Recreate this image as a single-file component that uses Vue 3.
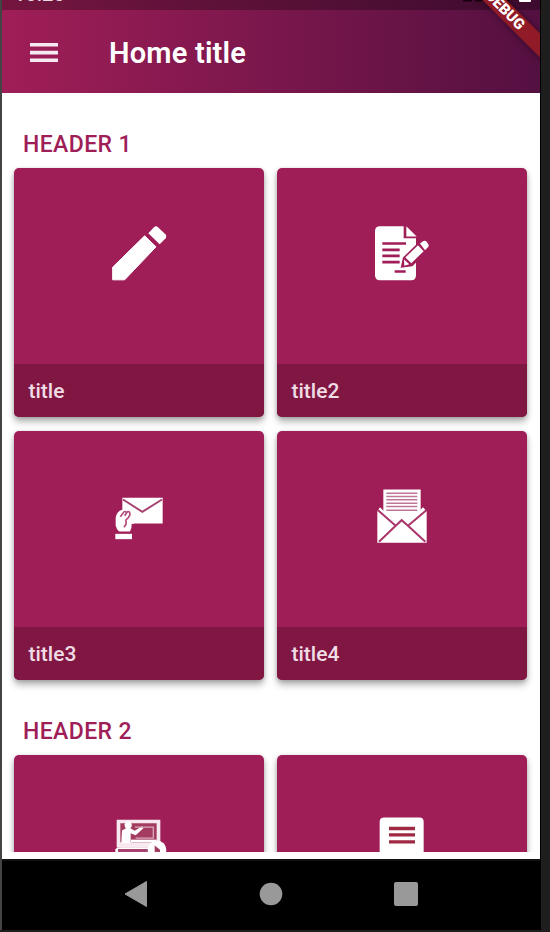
<script setup>
const sections = [
  {
    header: 'HEADER 1',
    cards: [
      { title: 'title', icon: 'pencil' },
      { title: 'title2', icon: 'document' },
      { title: 'title3', icon: 'hand' },
      { title: 'title4', icon: 'mail' },
    ],
  },
  {
    header: 'HEADER 2',
    cards: [
      { title: '', icon: 'class' },
      { title: '', icon: 'notes' },
    ],
  },
]
</script>

<template>
  <div class="device">
    <div class="screen">
      <header class="top">
        <div class="status">
          <span class="clock">10:20</span>
          <svg class="signals" width="80" height="10" viewBox="0 0 80 10">
            <path d="M3 0h9v1.5H3zM15 0h7v1.5h-7zM36 0h14v1.5H36z" fill="#16020f" />
            <rect x="59" y="-6" width="12" height="8" rx="1" fill="#fff" />
          </svg>
        </div>
        <div class="appbar">
          <svg class="menu" width="28" height="22" viewBox="0 0 28 22">
            <path d="M0 1h28v3.6H0zM0 8.8h28v3.6H0zM0 16.4h28V20H0z" fill="#f6e9ef" />
          </svg>
          <h1>Home title</h1>
        </div>
        <div class="debug">DEBUG</div>
      </header>

      <main class="content">
        <section v-for="s in sections" :key="s.header">
          <h2>{{ s.header }}</h2>
          <div class="grid">
            <article v-for="c in s.cards" :key="c.icon" class="card">
              <svg class="art" width="250" height="196" viewBox="0 0 250 196">
                <g v-if="c.icon === 'pencil'" transform="translate(76 42.5) scale(.33333)" fill="#fff">
                  <path d="M68 170 164 76 198 109 104 208H68z" stroke="#fff" stroke-width="3" stroke-linejoin="round" />
                  <path d="M175 68 192 50Q198 45 204 50L227 72Q231 78 227 83L209 101z" />
                </g>
                <g v-else-if="c.icon === 'document'" transform="translate(73 42.5) scale(.33333)">
                  <path d="M90 47H161V83H198V194Q198 209 184 209H90Q75 209 75 194V62Q75 47 90 47z" fill="#fff" />
                  <path d="M169 47 200 78H169z" fill="#fff" />
                  <path d="M97 99H168M97 118H149M97 136H149M97 155H149M134 183H167" stroke="#a01e57" stroke-width="8" />
                  <path d="M152 172 159 141 209 92 237 119 187 167z" fill="#a01e57" />
                  <path d="M210 99 219 92Q226 88 231 95L235 101Q238 106 233 111L225 119zM204 104 221 122 184 158 166 141zM162 147 178 161 163 166z" fill="#fff" />
                </g>
                <g v-else-if="c.icon === 'hand'" transform="translate(76 44.5) scale(.33333)">
                  <path d="M97 67H218V144H97z" fill="#fff" />
                  <path d="M99 72 157 109 216 72" fill="none" stroke="#a84270" stroke-width="6" />
                  <path d="M96 103Q78 109 77 130V150Q79 160 87 168H120Q126 158 125 145H132V118L120 104z" fill="#fff" />
                  <path d="M91 124 99 113Q105 103 110 113M104 121 112 109Q119 105 120 117Q117 127 108 133V146L102 155" fill="none" stroke="#b3477b" stroke-width="5" />
                  <path d="M76 175H126V191H76z" fill="#fff" />
                </g>
                <g v-else-if="c.icon === 'mail'" transform="translate(73 44.5) scale(.33333)">
                  <path d="M100 42H212V118L155 155 100 118z" fill="#fff" />
                  <path d="M109 53H202M109 63H202M109 73H202M109 83H202M109 93H202M109 104H202" stroke="#be7698" stroke-width="4.5" />
                  <path d="M82 107 90 95 100 105 137 142 155 127 174 142 219 95 230 107V202H82z" fill="#fff" />
                  <path d="M84 104 137 151 87 199M229 104 174 151 226 199M137 151 155 134 174 151" fill="none" stroke="#a9356a" stroke-width="6" />
                </g>
                <g v-else-if="c.icon === 'class'" transform="translate(76 44.5) scale(.33333)">
                  <path d="M80 61H211V144H80z" fill="#f7e9ef" />
                  <path d="M91 71H200V128H91z" fill="#a33c60" />
                  <path d="M96 93 108 86A11 11 0 1 1 121 86L134 94 157 80 160 86 137 107 122 101V131H94z" fill="#fff" />
                  <path d="M135 83H190V116H137" fill="none" stroke="#dba8b8" stroke-width="4" />
                  <path d="M123 124H200" stroke="#fff" stroke-width="7" />
                  <path d="M76 158V149Q80 143 89 143H200V158" fill="#fff" />
                  <path d="M84 153H178" stroke="#a84270" stroke-width="9" />
                  <circle cx="201" cy="151" r="28" fill="#fff" />
                  <path d="M194 138 210 151V160H194z" fill="#a33c60" />
                </g>
                <g v-else transform="translate(73 44.5) scale(.33333)">
                  <path d="M103 54H208Q221 54 221 67V180H89V67Q89 54 103 54z" fill="#fff" />
                  <path d="M117 87H195M117 106H195M117 127H195" stroke="#9f2943" stroke-width="10" />
                </g>
              </svg>
              <footer>{{ c.title }}</footer>
            </article>
          </div>
        </section>
      </main>

      <nav class="nav">
        <svg width="24" height="28" viewBox="0 0 24 28"><path d="M1 14 22.5 1.5v25z" fill="#999" stroke="#999" stroke-linejoin="round" /></svg>
        <svg width="24" height="28" viewBox="0 0 24 28"><circle cx="12" cy="14" r="11.3" fill="#999" /></svg>
        <svg width="24" height="28" viewBox="0 0 24 28"><rect y="2" width="24" height="24" rx="2" fill="#999" /></svg>
      </nav>
    </div>
  </div>
</template>

<style>
body { background: #1e1e1e; }
</style>

<style scoped>
.device {
  box-sizing: border-box;
  width: 550px;
  height: 932px;
  padding: 0 9px 2px 0;
  background: #1e1e1e;
  overflow: hidden;
  font-family: Roboto, sans-serif;
}
.screen {
  box-sizing: border-box;
  height: 930px;
  display: flex;
  flex-direction: column;
  border-left: 2px solid #444;
  border-right: 1px solid #000;
  background: #000;
}
.top {
  position: relative;
  flex: none;
  height: 93px;
  overflow: hidden;
  background: linear-gradient(90deg, #a01e57 0%, #541041 100%);
}
.status {
  display: flex;
  justify-content: space-between;
  height: 9.5px;
  background: rgba(0, 0, 0, .27);
  overflow: hidden;
}
.clock {
  margin: -15px 0 0 12px;
  font-size: 20px;
  line-height: 18px;
  font-weight: 500;
  color: #ead8e1;
}
.appbar {
  display: flex;
  align-items: center;
  height: 83.5px;
  padding-left: 28px;
}
.menu { margin: 3px 52px 0 0; }
h1 {
  margin: 4px 0 0 -1px;
  font-size: 29px;
  font-weight: 600;
  letter-spacing: .2px;
  line-height: 34px;
  color: #fff;
}
.debug {
  position: absolute;
  left: 434px;
  top: 2px;
  width: 138px;
  height: 17px;
  transform: rotate(45deg);
  background: #901b26;
  box-shadow: 0 0 7px rgba(0, 0, 0, .45);
  color: #fff;
  font-size: 15px;
  font-weight: 900;
  line-height: 17px;
  text-align: center;
}
.content {
  flex: none;
  box-sizing: border-box;
  height: 766px;
  padding: 0 12px 7px;
  background: #fff;
  overflow: hidden;
  display: flex;
  flex-direction: column;
}
section { flex: none; }
section:first-child { padding-top: 35.5px; }
section:last-child {
  flex: 1;
  min-height: 0;
  margin: 36px -12px 0;
  padding: 0 12px;
  overflow: hidden;
}
h2 {
  margin: 0 0 8px 9px;
  height: 31px;
  font-size: 23px;
  font-weight: 500;
  letter-spacing: .4px;
  line-height: 32px;
  color: #a01e57;
}
.grid {
  display: grid;
  grid-template-columns: 250px 250px;
  gap: 13.5px 13px;
}
.card {
  display: flex;
  flex-direction: column;
  height: 249.5px;
  border-radius: 5px;
  background: #a01e57;
  box-shadow: 0 5px 7px rgba(0, 0, 0, .28), 0 1px 4px rgba(0, 0, 0, .18);
  overflow: hidden;
}
.art { display: block; flex: none; }
footer {
  flex: 1;
  padding-left: 14.5px;
  background: #801742;
  color: #f0dce5;
  font-size: 21px;
  font-weight: 500;
  line-height: 55px;
}
.nav {
  flex: 1;
  display: flex;
  justify-content: center;
  align-items: center;
  gap: 111px;
  padding: 0 1px 3px 0;
  border-top: 2px solid #111;
}
</style>
